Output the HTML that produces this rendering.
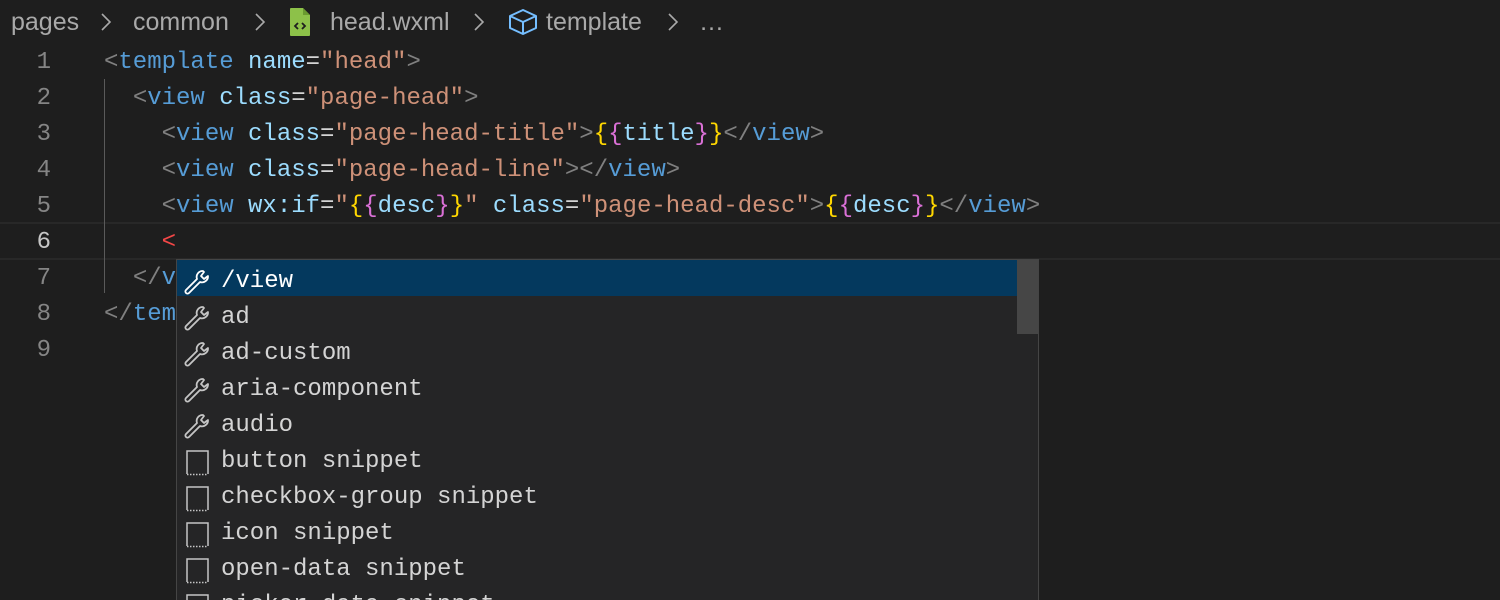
<!DOCTYPE html>
<html><head><meta charset="utf-8"><style>
html,body{margin:0;padding:0;background:#1e1e1e;width:1500px;height:600px;overflow:hidden;position:relative}
.bc{position:absolute;top:4px;font-family:"Liberation Sans",sans-serif;font-size:25px;color:#a9a9a9;line-height:36px;white-space:nowrap}
.chev{position:absolute;top:12px}
.ln{position:absolute;left:0;width:51px;text-align:right;font-family:"Liberation Mono",monospace;font-size:24px;color:#858585;line-height:36px;margin-top:2px}
.code{position:absolute;left:104px;font-family:"Liberation Mono",monospace;font-size:24px;line-height:36px;white-space:pre;color:#d4d4d4;margin-top:2px}
.p{color:#808080}.t{color:#569cd6}.a{color:#9cdcfe}.s{color:#ce9178}.y{color:#ffd700}.m{color:#da70d6}.r{color:#f44747}
.sug{position:absolute;left:176px;top:259px;width:861px;height:360px;background:#252526;border:1px solid #454545;font-family:"Liberation Mono",monospace;font-size:24px;color:#d4d4d4}
.row{position:absolute;left:0;width:840px;height:36px;line-height:36px}
.row span{position:absolute;left:44px;top:4px}
.row svg{position:absolute;left:6px;top:8px}
</style></head><body>
<div class="bc" style="left:11px">pages</div>
<svg class="chev" style="left:99px" width="14" height="20" viewBox="0 0 14 20"><path d="M3 2l8 8-8 8" fill="none" stroke="#a9a9a9" stroke-width="1.6"/></svg>
<div class="bc" style="left:133px">common</div>
<svg class="chev" style="left:253px" width="14" height="20" viewBox="0 0 14 20"><path d="M3 2l8 8-8 8" fill="none" stroke="#a9a9a9" stroke-width="1.6"/></svg>
<svg style="position:absolute;left:289px;top:7px" width="22" height="30" viewBox="0 0 22 30"><path d="M2 1h12l7 7v20a1 1 0 0 1-1 1H2a1 1 0 0 1-1-1V2a1 1 0 0 1 1-1z" fill="#8dc149"/><path d="M14 1v7h7" fill="#6a9a30"/><path d="M9 16l-3 3 3 3M13 16l3 3-3 3" fill="none" stroke="#1e1e1e" stroke-width="1.8"/></svg>
<div class="bc" style="left:330px">head.wxml</div>
<svg class="chev" style="left:472px" width="14" height="20" viewBox="0 0 14 20"><path d="M3 2l8 8-8 8" fill="none" stroke="#a9a9a9" stroke-width="1.6"/></svg>
<svg style="position:absolute;left:508px;top:8px" width="30" height="28" viewBox="0 0 30 28"><path d="M15 2L28 8v12l-13 6L2 20V8z M2 8l13 6 13-6 M15 14v12" fill="none" stroke="#75beff" stroke-width="2" stroke-linejoin="round"/></svg>
<div class="bc" style="left:546px">template</div>
<svg class="chev" style="left:666px" width="14" height="20" viewBox="0 0 14 20"><path d="M3 2l8 8-8 8" fill="none" stroke="#a9a9a9" stroke-width="1.6"/></svg>
<div class="bc" style="left:699px">…</div>

<div style="position:absolute;left:0;right:0;top:222px;height:34px;border-top:2px solid #282828;border-bottom:2px solid #282828"></div>
<div style="position:absolute;left:104px;top:79px;width:1px;height:214px;background:#5a5a5a"></div>

<div class="ln" style="top:43px">1</div>
<div class="ln" style="top:79px">2</div>
<div class="ln" style="top:115px">3</div>
<div class="ln" style="top:151px">4</div>
<div class="ln" style="top:187px">5</div>
<div class="ln" style="top:223px;color:#c6c6c6">6</div>
<div class="ln" style="top:259px">7</div>
<div class="ln" style="top:295px">8</div>
<div class="ln" style="top:331px">9</div>

<div class="code" style="top:43px"><span class="p">&lt;</span><span class="t">template</span> <span class="a">name</span>=<span class="s">"head"</span><span class="p">&gt;</span></div>
<div class="code" style="top:79px">  <span class="p">&lt;</span><span class="t">view</span> <span class="a">class</span>=<span class="s">"page-head"</span><span class="p">&gt;</span></div>
<div class="code" style="top:115px">    <span class="p">&lt;</span><span class="t">view</span> <span class="a">class</span>=<span class="s">"page-head-title"</span><span class="p">&gt;</span><span class="y">{</span><span class="m">{</span><span class="a">title</span><span class="m">}</span><span class="y">}</span><span class="p">&lt;/</span><span class="t">view</span><span class="p">&gt;</span></div>
<div class="code" style="top:151px">    <span class="p">&lt;</span><span class="t">view</span> <span class="a">class</span>=<span class="s">"page-head-line"</span><span class="p">&gt;&lt;/</span><span class="t">view</span><span class="p">&gt;</span></div>
<div class="code" style="top:187px">    <span class="p">&lt;</span><span class="t">view</span> <span class="a">wx:if</span>=<span class="s">"</span><span class="y">{</span><span class="m">{</span><span class="a">desc</span><span class="m">}</span><span class="y">}</span><span class="s">"</span> <span class="a">class</span>=<span class="s">"page-head-desc"</span><span class="p">&gt;</span><span class="y">{</span><span class="m">{</span><span class="a">desc</span><span class="m">}</span><span class="y">}</span><span class="p">&lt;/</span><span class="t">view</span><span class="p">&gt;</span></div>
<div class="code" style="top:223px">    <span class="r">&lt;</span></div>
<div class="code" style="top:259px">  <span class="p">&lt;/</span><span class="t">view</span><span class="p">&gt;</span></div>
<div class="code" style="top:295px"><span class="p">&lt;/</span><span class="t">template</span><span class="p">&gt;</span></div>

<div class="sug">
<div class="row" style="top:0;background:#04395e;color:#fff"><svg width="28" height="28" viewBox="0 0 28 28"><path d="M20 3a6 6 0 0 0-6 8L3 22a2 2 0 0 0 3 3l11-11a6 6 0 0 0 8-6l-4 3-3-3 3-4z" fill="none" stroke="#fff" stroke-width="1.8" stroke-linejoin="round"/></svg><span>/view</span></div>
<div class="row" style="top:36px"><svg width="28" height="28" viewBox="0 0 28 28"><path d="M20 3a6 6 0 0 0-6 8L3 22a2 2 0 0 0 3 3l11-11a6 6 0 0 0 8-6l-4 3-3-3 3-4z" fill="none" stroke="#c5c5c5" stroke-width="1.8" stroke-linejoin="round"/></svg><span>ad</span></div>
<div class="row" style="top:72px"><svg width="28" height="28" viewBox="0 0 28 28"><path d="M20 3a6 6 0 0 0-6 8L3 22a2 2 0 0 0 3 3l11-11a6 6 0 0 0 8-6l-4 3-3-3 3-4z" fill="none" stroke="#c5c5c5" stroke-width="1.8" stroke-linejoin="round"/></svg><span>ad-custom</span></div>
<div class="row" style="top:108px"><svg width="28" height="28" viewBox="0 0 28 28"><path d="M20 3a6 6 0 0 0-6 8L3 22a2 2 0 0 0 3 3l11-11a6 6 0 0 0 8-6l-4 3-3-3 3-4z" fill="none" stroke="#c5c5c5" stroke-width="1.8" stroke-linejoin="round"/></svg><span>aria-component</span></div>
<div class="row" style="top:144px"><svg width="28" height="28" viewBox="0 0 28 28"><path d="M20 3a6 6 0 0 0-6 8L3 22a2 2 0 0 0 3 3l11-11a6 6 0 0 0 8-6l-4 3-3-3 3-4z" fill="none" stroke="#c5c5c5" stroke-width="1.8" stroke-linejoin="round"/></svg><span>audio</span></div>
<div class="row" style="top:180px"><svg width="28" height="28" viewBox="0 0 28 28"><path d="M4 26V3h21v23" fill="none" stroke="#c5c5c5" stroke-width="1.5"/><path d="M4 26.5h21" stroke="#c5c5c5" stroke-width="1.5" stroke-dasharray="1.5 1.5"/></svg><span>button snippet</span></div>
<div class="row" style="top:216px"><svg width="28" height="28" viewBox="0 0 28 28"><path d="M4 26V3h21v23" fill="none" stroke="#c5c5c5" stroke-width="1.5"/><path d="M4 26.5h21" stroke="#c5c5c5" stroke-width="1.5" stroke-dasharray="1.5 1.5"/></svg><span>checkbox-group snippet</span></div>
<div class="row" style="top:252px"><svg width="28" height="28" viewBox="0 0 28 28"><path d="M4 26V3h21v23" fill="none" stroke="#c5c5c5" stroke-width="1.5"/><path d="M4 26.5h21" stroke="#c5c5c5" stroke-width="1.5" stroke-dasharray="1.5 1.5"/></svg><span>icon snippet</span></div>
<div class="row" style="top:288px"><svg width="28" height="28" viewBox="0 0 28 28"><path d="M4 26V3h21v23" fill="none" stroke="#c5c5c5" stroke-width="1.5"/><path d="M4 26.5h21" stroke="#c5c5c5" stroke-width="1.5" stroke-dasharray="1.5 1.5"/></svg><span>open-data snippet</span></div>
<div class="row" style="top:324px"><svg width="28" height="28" viewBox="0 0 28 28"><path d="M4 26V3h21v23" fill="none" stroke="#c5c5c5" stroke-width="1.5"/></svg><span>picker-data snippet</span></div>
<div style="position:absolute;left:840px;top:0;width:21px;height:74px;background:rgba(121,121,121,0.4)"></div>
</div>
</body></html>
